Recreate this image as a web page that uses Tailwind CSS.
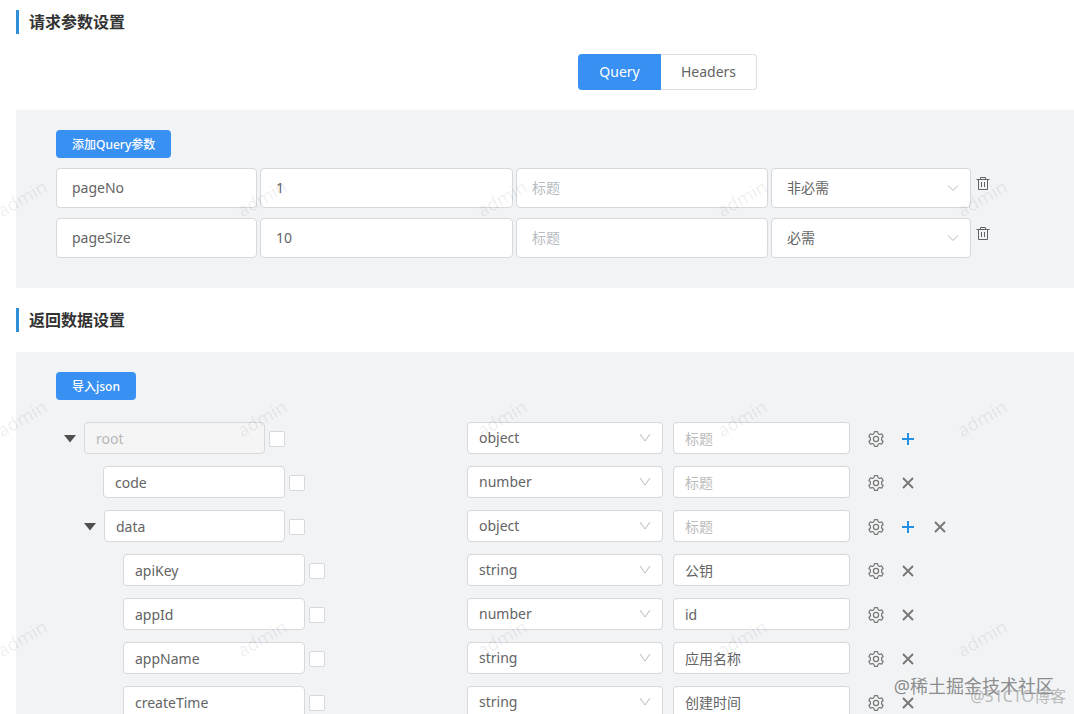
<!DOCTYPE html>
<html lang="zh-CN">
<head>
<meta charset="utf-8">
<title>接口参数设置</title>
<script src="https://cdn.jsdelivr.net/npm/@tailwindcss/browser@4"></script>
</head>
<body class="relative h-screen overflow-hidden bg-white font-['Noto_Sans','Noto_Sans_CJK_SC',sans-serif] text-sm text-[#646464]">

<svg class="hidden" aria-hidden="true">
  <symbol id="gear" viewBox="0 0 16 16"><path d="M6.500 .6h3l.6 2.100 1.400.8 2.100-.6 1.500 2.600-1.500 1.500v2l1.500 1.500-1.500 2.600-2.100-.6-1.400.8-.6 2.100h-3l-.6-2.100-1.400-.8-2.100.6-1.500-2.600L2.400 9V7L.9 5.500l1.500-2.600 2.100.6 1.400-.8z" fill="none" stroke="currentColor" stroke-width="1.200" stroke-linejoin="round"/><circle cx="8" cy="8" r="2.600" fill="none" stroke="currentColor" stroke-width="1.200"/></symbol>
  <symbol id="plus" viewBox="0 0 16 16"><path d="M8 2v12M2 8h12" fill="none" stroke="currentColor" stroke-width="2"/></symbol>
  <symbol id="close" viewBox="0 0 16 16"><path d="M3 3l10 10M13 3L3 13" fill="none" stroke="currentColor" stroke-width="1.900"/></symbol>
  <symbol id="trash" viewBox="0 0 14 14"><path d="M.5 3.500h13M4.500 3.500v-2h5v2M2.500 3.500v10h9v-10M5.500 6v5M8.500 6v5" fill="none" stroke="currentColor"/></symbol>
  <symbol id="chevron" viewBox="0 0 12 12"><path d="M1 3.500l5 5 5-5" fill="none" stroke="currentColor"/></symbol>
  <symbol id="arrow" viewBox="0 0 12 12"><path d="M1 2l5 7 5-7" fill="none" stroke="currentColor"/></symbol>
  <symbol id="caret" viewBox="0 0 12 8"><path d="M0 0h12L6 7.500z" fill="currentColor"/></symbol>
</svg>

<main class="flex flex-col gap-5 pl-4 pt-2.5">
  <h2 class="border-l-3 border-[#2f8fd8] pl-2.5 text-base leading-6 font-semibold text-[#333333]">请求参数设置</h2>

  <div class="flex justify-center pl-[245px]">
    <button class="h-9 w-[83px] rounded-l-sm bg-[#3890f2] text-white">Query</button>
    <button class="h-9 w-24 rounded-r-sm border border-l-0 border-[#dcdfe3] bg-white">Headers</button>
  </div>

  <section class="bg-[#f1f3f5] pt-5 pb-[30px] pl-10">
    <button class="h-7 rounded bg-[#3890f2] px-4 pt-0.5 text-xs font-medium text-white">添加Query参数</button>
    <div class="mt-2.5 grid grid-cols-[201fr_253fr_252fr_200fr_100px] gap-x-[3px] gap-y-2.5">
      <input aria-label="参数名" value="pageNo" class="h-10 w-full min-w-0 rounded border border-[#d5d8dc] bg-white px-[15px] pb-0.5">
      <input aria-label="参数值" value="1" class="h-10 w-full min-w-0 rounded border border-[#d5d8dc] bg-white px-[15px] pb-0.5">
      <input aria-label="标题" placeholder="标题" class="h-10 w-full min-w-0 rounded border border-[#d5d8dc] bg-white px-[15px] pb-0.5 placeholder:text-[#b8bcc2]">
      <div class="relative">
        <select aria-label="是否必需" class="h-10 w-full appearance-none rounded border border-[#d5d8dc] bg-white px-[15px]"><option>非必需</option><option>必需</option></select>
        <svg class="pointer-events-none absolute top-3.5 right-3 size-3 text-[#b4b8be]"><use href="#chevron"/></svg>
      </div>
      <button aria-label="删除" class="mt-2 ml-0.5 size-3.5 text-[#606266]"><svg class="size-3.5"><use href="#trash"/></svg></button>

      <input aria-label="参数名" value="pageSize" class="h-10 w-full min-w-0 rounded border border-[#d5d8dc] bg-white px-[15px] pb-0.5">
      <input aria-label="参数值" value="10" class="h-10 w-full min-w-0 rounded border border-[#d5d8dc] bg-white px-[15px] pb-0.5">
      <input aria-label="标题" placeholder="标题" class="h-10 w-full min-w-0 rounded border border-[#d5d8dc] bg-white px-[15px] pb-0.5 placeholder:text-[#b8bcc2]">
      <div class="relative">
        <select aria-label="是否必需" class="h-10 w-full appearance-none rounded border border-[#d5d8dc] bg-white px-[15px]"><option>必需</option><option>非必需</option></select>
        <svg class="pointer-events-none absolute top-3.5 right-3 size-3 text-[#b4b8be]"><use href="#chevron"/></svg>
      </div>
      <button aria-label="删除" class="mt-2 ml-0.5 size-3.5 text-[#606266]"><svg class="size-3.5"><use href="#trash"/></svg></button>
    </div>
  </section>

  <h2 class="border-l-3 border-[#2f8fd8] pl-2.5 text-base leading-6 font-semibold text-[#333333]">返回数据设置</h2>

  <section class="bg-[#f1f3f5] pt-5 pb-8 pl-10">
    <button class="h-7 rounded bg-[#3890f2] px-4 pt-0.5 text-xs font-medium text-white">导入json</button>
    <div id="fields" class="mt-[22px] flex flex-col gap-3"></div>
  </section>
</main>

<div class="pointer-events-none absolute top-[88px] -left-[98px] grid grid-cols-[repeat(5,240px)] auto-rows-[220px] place-items-center text-lg text-black/7" aria-hidden="true" id="marks"></div>

<div class="pointer-events-none absolute right-5 bottom-4 text-lg leading-6 text-[#707070]/80">@稀土掘金技术社区</div>
<div class="pointer-events-none absolute right-2 bottom-2 text-base leading-5 text-[#a0a0a0]/70">@51CTO博客</div>

<script>
  const indents = ['pl-2', 'pl-7', 'pl-12'];
  const fields = [
    { name: 'root', level: 0, type: 'object', title: '', open: true, root: true },
    { name: 'code', level: 1, type: 'number', title: '' },
    { name: 'data', level: 1, type: 'object', title: '', open: true },
    { name: 'apiKey', level: 2, type: 'string', title: '公钥' },
    { name: 'appId', level: 2, type: 'number', title: 'id' },
    { name: 'appName', level: 2, type: 'string', title: '应用名称' },
    { name: 'createTime', level: 2, type: 'string', title: '创建时间' }
  ];
  document.getElementById('fields').innerHTML = fields.map(f => `
    <div class="grid grid-cols-[411fr_206fr_177fr_224fr] items-center">
      <div class="flex items-center ${indents[f.level]}">
        ${f.open ? '<button aria-label="收起" class="mt-0.5 mr-2 h-2 w-3 text-[#505050]"><svg class="block h-2 w-3"><use href="#caret"/></svg></button>' : ''}
        <input aria-label="字段名" value="${f.name}" ${f.root ? 'disabled' : ''} class="h-8 rounded border border-[#d5d8dc] bg-white px-[11px] disabled:bg-[#f5f5f5] disabled:text-[#b8b8b8] ${f.open ? 'w-[181px]' : 'ml-[19px] w-[182px]'}">
        <input type="checkbox" aria-label="必需" class="ml-1 mt-0.5 size-4 appearance-none rounded-xs border border-[#d5d8dc] bg-white">
      </div>
      <div class="relative pr-2.5">
        <select aria-label="类型" class="block h-8 w-full appearance-none rounded border border-[#d5d8dc] bg-white px-[11px]">
          ${['object', 'number', 'string'].map(t => `<option ${t === f.type ? 'selected' : ''}>${t}</option>`).join('')}
        </select>
        <svg class="pointer-events-none absolute top-2.5 right-[22px] size-3 text-[#b8b8b8]"><use href="#arrow"/></svg>
      </div>
      <input aria-label="标题" placeholder="标题" value="${f.title}" class="h-8 w-full min-w-0 rounded border border-[#d5d8dc] bg-white px-[11px] placeholder:text-[#bcbcbc]">
      <div class="flex gap-4 pt-0.5 pl-[18px] text-[#777777]">
        <button aria-label="设置"><svg class="block size-4"><use href="#gear"/></svg></button>
        ${f.open ? '<button aria-label="添加" class="text-[#2490e0]"><svg class="block size-4"><use href="#plus"/></svg></button>' : ''}
        ${f.root ? '' : '<button aria-label="删除"><svg class="block size-4"><use href="#close"/></svg></button>'}
      </div>
    </div>`).join('');
  document.getElementById('marks').innerHTML = '<span class="-rotate-30">admin</span>'.repeat(15);
</script>
</body>
</html>
